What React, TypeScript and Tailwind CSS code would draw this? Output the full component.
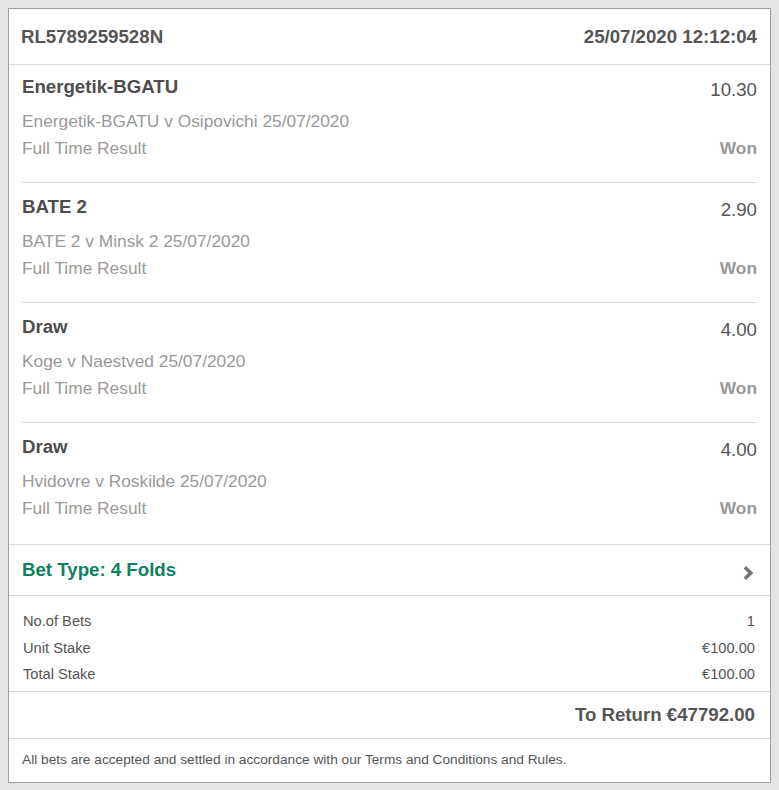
import React from "react";

const selections = [
  { name: "Energetik-BGATU", odds: "10.30", event: "Energetik-BGATU v Osipovichi 25/07/2020", first: true, last: false },
  { name: "BATE 2", odds: "2.90", event: "BATE 2 v Minsk 2 25/07/2020", first: false, last: false },
  { name: "Draw", odds: "4.00", event: "Koge v Naestved 25/07/2020", first: false, last: false },
  { name: "Draw", odds: "4.00", event: "Hvidovre v Roskilde 25/07/2020", first: false, last: true },
];

export default function App() {
  return (
    <div
      className="min-h-[790px] bg-[#e5e5e5] p-2"
      style={{ fontFamily: '"Liberation Sans", Arial, sans-serif' }}
    >
      <div className="border border-[#a0a0a0] bg-white">
        {/* Header */}
        <div className="flex h-[56px] items-center justify-between border-b border-[#d9d9d9] pl-[12px] pr-[13px] text-[18.67px] font-bold text-[#555]">
          <span>RL5789259528N</span>
          <span>25/07/2020 12:12:04</span>
        </div>

        {/* Selections */}
        {selections.map((s, i) => (
          <div
            key={i}
            className={`mx-[13px] ${s.first ? "pt-[11px]" : "pt-[13px]"} ${
              s.last ? "pb-[22px]" : "pb-[20px] border-b border-[#d9d9d9]"
            }`}
          >
            <div className="flex h-[22px] items-start justify-between">
              <span className="text-[18.67px] font-bold leading-[22px] text-[#4d4d4d]">{s.name}</span>
              <span className="relative top-[3px] text-[18.67px] leading-[22px] text-[#555]">{s.odds}</span>
            </div>
            <div className="mt-[10px] text-[17.33px] leading-[27px] text-[#999]">{s.event}</div>
            <div className="flex items-center justify-between text-[17.33px] leading-[27px] text-[#999]">
              <span>Full Time Result</span>
              <span className="font-bold">Won</span>
            </div>
          </div>
        ))}

        {/* Bet type */}
        <div className="flex h-[52px] items-center justify-between border-t border-b border-[#d9d9d9] pl-[13px] pr-[16px]">
          <span className="text-[18.67px] font-bold text-[#0d8161]">Bet Type: 4 Folds</span>
          <svg width="12" height="16" viewBox="0 0 12 16" className="mt-[5px]">
            <path d="M2.8 2.2 L8.8 8 L2.8 13.8" fill="none" stroke="#777" strokeWidth="3.6" strokeLinejoin="miter" />
          </svg>
        </div>

        {/* Stakes */}
        <div className="border-b border-[#d9d9d9] pb-[3px] pl-[14px] pr-[15px] pt-[12px] text-[14.67px] leading-[26.5px] text-[#555]">
          <div className="flex justify-between">
            <span>No.of Bets</span>
            <span>1</span>
          </div>
          <div className="flex justify-between">
            <span>Unit Stake</span>
            <span>€100.00</span>
          </div>
          <div className="flex justify-between">
            <span>Total Stake</span>
            <span>€100.00</span>
          </div>
        </div>

        {/* To return */}
        <div className="flex h-[47px] items-center justify-end border-b border-[#d9d9d9] pr-[15px] text-[18.67px] font-bold text-[#555]">
          To Return €47792.00
        </div>

        {/* Footer */}
        <div className="flex h-[43px] items-center pl-[13px] text-[13.7px] text-[#555]">
          All bets are accepted and settled in accordance with our Terms and Conditions and Rules.
        </div>
      </div>
    </div>
  );
}
